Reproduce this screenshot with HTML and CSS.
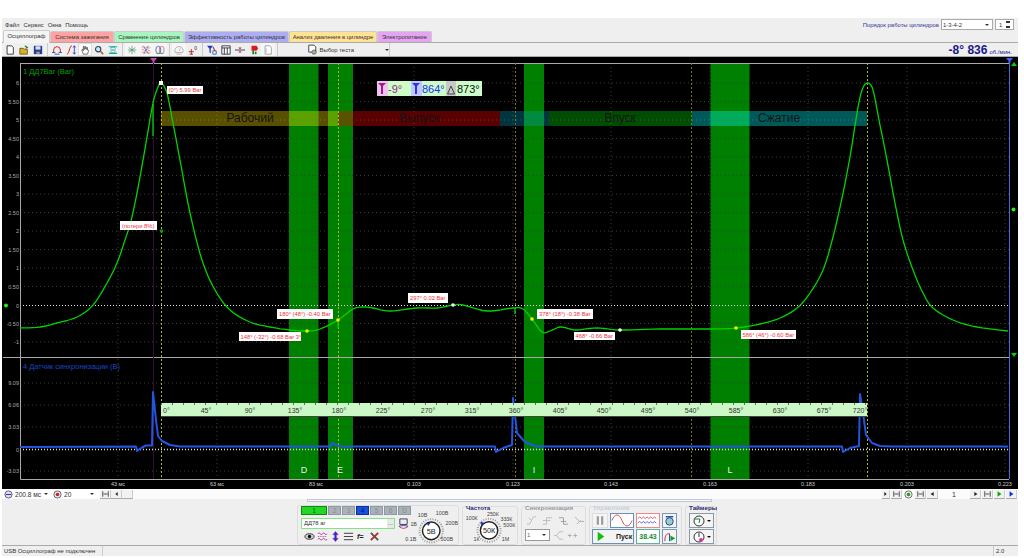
FILE: index.html
```html
<!DOCTYPE html>
<html lang="ru">
<head>
    <meta charset="UTF-8">
    <title>Осциллограф</title>
    <link rel="stylesheet" href="styles.css">
</head>
<body>
<div class="app">
    <div class="menu-row">
        <span>Файл</span><span>Сервис</span><span>Окна</span><span>Помощь</span>
        <div class="cyl-order">
            <label>Порядок работы цилиндров</label>
            <div class="combo combo-order">1-3-4-2<i class="arrow"></i></div>
            <div class="combo combo-spin">1<b class="spin"></b></div>
        </div>
    </div>

    <div class="tabs">
        <div class="tab active">Осциллограф</div>
        <div class="tab red">Система зажигания</div>
        <div class="tab green">Сравнение цилиндров</div>
        <div class="tab blue">Эффективность работы цилиндров</div>
        <div class="tab yellow">Анализ давления в цилиндре</div>
        <div class="tab purple">Электропитание</div>
    </div>

    <div class="toolbar">
        <div class="tool-group">
            <div class="tool"><svg viewBox="0 0 12 12"><path d="M2.500 1H8l2 2v8H2.500z" fill="#fff" stroke="#222"/></svg></div>
            <div class="tool"><svg viewBox="0 0 12 12"><path d="M1 4h4l1 1h4v6H1z" fill="#d8b030" stroke="#665510"/><path d="M7 1l3 2-2 1" fill="none" stroke="#2a8a2a" stroke-width="1.400"/></svg></div>
            <div class="tool"><svg viewBox="0 0 12 12"><path d="M1 1h10v10H1z" fill="#24408c"/><path d="M3 1.500h6v4H3z" fill="#dde"/><path d="M4 8h4v3H4z" fill="#99a"/></svg></div>
        </div>
        <div class="tool-group">
            <div class="tool"><svg viewBox="0 0 12 12"><path d="M2 9V6a4 4 0 0 1 8 0v3" fill="none" stroke="#e02020" stroke-width="1.200"/><path d="M0 9h4M8 9h4M3 11h6" stroke="#2040c0"/></svg></div>
            <div class="tool"><svg viewBox="0 0 12 12"><path d="M1 11c3 0 3-10 6-10" fill="none" stroke="#e02020" stroke-width="1.200"/><path d="M10 1v10M8.500 3L10 1l1.500 2M8.500 9l1.500 2 1.500-2" fill="none" stroke="#2040c0"/></svg></div>
            <div class="tool pressed"><svg viewBox="0 0 12 12"><path d="M4 11L2 6l1-1 1 2V1.500h1V5h1V2h1v3h1V3h1v3h1v2l-1 3z" fill="#fff" stroke="#333" stroke-width=".8"/></svg></div>
            <div class="tool"><svg viewBox="0 0 12 12"><circle cx="5" cy="5" r="3.200" fill="#cfe4ff" stroke="#245" stroke-width="1.300"/><path d="M7.500 7.500L11 11" stroke="#a06a20" stroke-width="2"/></svg></div>
            <div class="tool"><svg viewBox="0 0 12 12"><path d="M1 2h10M1 10h10M3 6h6" stroke="#10b0a0" stroke-width="1.300"/><path d="M3 4l3-2 3 2M3 8l3 2 3-2" fill="none" stroke="#10a090"/></svg></div>
        </div>
        <div class="tool-group">
            <div class="tool pale"><svg viewBox="0 0 12 12"><path d="M6 1v10M1 6h10" stroke="#888"/><path d="M2 3l4 3 4-3M2 9l4-3 4 3" fill="none" stroke="#40b070"/></svg></div>
            <div class="tool pale"><svg viewBox="0 0 12 12"><path d="M1 3c2-3 3 3 5 0s3 3 5 0M1 6c2-3 3 3 5 0s3 3 5 0M1 9c2-3 3 3 5 0s3 3 5 0" fill="none" stroke="#e07050"/><path d="M3 1l6 10M9 1l-6 10" stroke="#3060c0" stroke-width=".7"/></svg></div>
            <div class="tool pale"><svg viewBox="0 0 12 12"><ellipse cx="4" cy="6" rx="3" ry="4.500" fill="none" stroke="#3060c0"/><ellipse cx="8" cy="6" rx="3" ry="4.500" fill="none" stroke="#d06080"/><path d="M2 10h8" stroke="#40a060"/></svg></div>
        </div>
        <div class="tool-group">
            <div class="tool pale"><svg viewBox="0 0 12 12"><path d="M1.500 9a5 5 0 1 1 9 0z" fill="none" stroke="#aaa"/><path d="M6 7l2-3" stroke="#aaa"/><path d="M3 11h6" stroke="#aaa"/></svg></div>
            <div class="tool"><svg viewBox="0 0 12 12"><path d="M1 8h6M4 5v6M2 11h4" stroke="#b02020" stroke-width="1.100"/><text x="7.500" y="6" class="tool-zero">0</text></svg></div>
        </div>
        <div class="tool-group">
            <div class="tool"><svg viewBox="0 0 12 12"><path d="M0 1h7L4.500 4.500V10L3 9V4.500z" fill="#1838c0"/><path d="M7 2l4 8" stroke="#d02020" stroke-width="1.300"/><path d="M7 7h4v4H7z" fill="#fff" stroke="#2050a0"/></svg></div>
            <div class="tool"><svg viewBox="0 0 12 12"><path d="M1 1h10v10H1zM1 3.500h10M4 3.500V11M7.500 3.500V11" fill="#fff" stroke="#223"/></svg></div>
            <div class="tool"><svg viewBox="0 0 12 12"><path d="M0 6h12" stroke="#222"/><path d="M4 3h4L6 5zM4 9h4L6 7z" fill="#b02070"/></svg></div>
            <div class="tool"><svg viewBox="0 0 12 12"><path d="M3 1h6l2 3-2 3H3z" fill="#e01818"/><path d="M4 7h2v4H4z" fill="#108030"/><path d="M7 8h2v3H7z" fill="#108030"/></svg></div>
            <div class="tool pale"><svg viewBox="0 0 12 12"><path d="M2.500 1H8l2 2v8H2.500z" fill="#fff" stroke="#999"/><path d="M4 4v5" stroke="#bbb"/></svg></div>
        </div>
        <div class="test-select">
            <svg viewBox="0 0 12 12"><path d="M2 1h6l2 2v6H2z" fill="#fff" stroke="#333"/><circle cx="8" cy="9" r="2.500" fill="#aaa" stroke="#333" stroke-width=".6"/></svg>
            <span>Выбор теста</span>
            <i class="arrow test-arrow"></i>
        </div>
        <div class="rpm"><b>-8° 836</b><span>об./мин.</span></div>
    </div>

    <svg class="scope" viewBox="2 57 1016 432" xmlns="http://www.w3.org/2000/svg">
        <rect x="2" y="57" width="1016" height="432" fill="#000"/>
        <!-- зелёные зоны -->
        <path d="M289 63h29.500v416H289zM328 63h25v416h-25zM524 63h20v416h-20zM710.500 63h39v416h-39z" fill="#008000"/>
        <!-- сетка -->
        <path class="grid" d="M118 63V479M217 63V479M316 63V479M414 63V479M513 63V479M611 63V479M710 63V479M808 63V479M907 63V479M1005 63V479"/>
        <path class="grid" d="M20 83H1009M20 101.500H1009M20 120H1009M20 138.500H1009M20 157H1009M20 175.500H1009M20 194H1009M20 212.500H1009M20 231H1009M20 249.500H1009M20 268H1009M20 286.500H1009M20 323.500H1009M20 342H1009M20 383H1009M20 405H1009M20 427H1009M20 471H1009"/>
        <path class="zero-line" d="M20 305.500H1009"/>
        <path class="zero-line thick" d="M20 449.500H1009"/>
        <!-- такты -->
        <rect class="work" x="161" y="111" width="177" height="15"/>
        <rect class="exhaust" x="338" y="111" width="162" height="15"/>
        <rect class="overlap" x="500" y="111" width="49" height="15"/>
        <rect class="intake" x="549" y="111" width="143" height="15"/>
        <rect class="compress" x="692" y="111" width="175" height="15"/>
        <text class="phase-name" x="250" y="122">Рабочий</text>
        <text class="phase-name" x="419" y="122">Выпуск</text>
        <text class="phase-name" x="620" y="122">Впуск</text>
        <text class="phase-name" x="779" y="122">Сжатие</text>
        <!-- рамка и маркеры -->
        <path class="frame" d="M20.500 63V479.500H1009M20 63.500H1009M3 357.500H1009"/>
        <path class="marker-purple" d="M153.500 63V479"/>
        <path class="marker-blue" d="M1009.500 63V479"/>
        <path class="tdc bright" d="M161.500 63V479M338.500 63V479M867.500 63V479"/>
        <path class="tdc" d="M515.500 63V479M691.500 63V479"/>
        <path d="M150 58h7l-2.500 3v2h-2v-2z" fill="#c040c0"/>
        <path d="M1006 58h7l-2.500 3v2h-2v-2z" fill="#4060ff"/>
        <path d="M1011 66l3-4 3 4z" fill="#00d000"/>
        <path d="M1011 353l3 4 3-4z" fill="#00d000"/>
        <circle cx="6" cy="305.500" r="2" fill="#20f020"/>
        <circle cx="1013.500" cy="209.500" r="2" fill="#20f020"/>
        <!-- датчик синхронизации -->
        <polyline class="trace-blue" points="20,447 136,446.500 137,451 142,447.500 146,445.500 152,445.500 153,392 156,420 158,436 162,441 170,445 180,446.500 330,446.500 332,443 336,445 342,446.500 495,446.500 496,452 503,448 512,445 513,398 517,433 525,442 535,446 545,446.500 842,446.500 843,452 850,448 859,446 860,394 864,420 866,435 872,443 880,446 892,446.500 1008,446.500"/>
        <!-- давление -->
        <polyline class="trace-green smooth" points="20,328 40,327 57,323 77,317 93,305 107,283 117,263 125,240 132,217 140,177 147,137 153,103 158,87 161,83 165,88 168,97 173,123 180,160 190,213 202,260 215,290 230,310 250,322 270,327 290,330 307,331 320,329 338,320 353,309 362,307 373,308 390,311 417,308 437,308 453,305 463,305 487,311 513,308 523,309 532,319 542,332 550,331 560,327 570,329 577,330 597,328 620,330 660,329 710,329 736,328 760,324 780,318 797,308 810,293 823,270 833,237 842,198 850,157 857,113 862,90 867.500,83 873,90 879,120 887,160 895,203 903,240 913,270 923,293 933,308 953,320 977,327 1008,331"/>
        <path class="trace-green" d="M153 104V136M338 320V328M515 308V314"/>
        <!-- шкала углов -->
        <rect x="161" y="403" width="706" height="13" fill="#ccf7c6"/>
        <path d="M161 416.500H867" stroke="#444"/>
        <path class="scale-ticks" d="M161 404H867"/>
        <g class="scale-text">
            <text x="163" y="413" class="start">0°</text><text x="206" y="413">45°</text><text x="250" y="413">90°</text><text x="295" y="413">135°</text><text x="339" y="413">180°</text><text x="383" y="413">225°</text><text x="428" y="413">270°</text><text x="472" y="413">315°</text><text x="516" y="413">360°</text><text x="560" y="413">405°</text><text x="604" y="413">450°</text><text x="648" y="413">495°</text><text x="692" y="413">540°</text><text x="736" y="413">585°</text><text x="780" y="413">630°</text><text x="824" y="413">675°</text><text x="860" y="413">720°</text>
        </g>
        <!-- буквы клапанов -->
        <g class="band-letter"><text x="304" y="473">D</text><text x="340" y="473">E</text><text x="534" y="473">I</text><text x="730" y="473">L</text></g>
        <!-- подписи осей -->
        <text class="ch-green" x="23" y="74">1 ДД7Bar (Bar)</text>
        <text class="ch-blue" x="23" y="369">4 Датчик синхронизации (В)</text>
        <g class="axis">
            <text x="19" y="85">6</text><text x="19" y="103.500">5.50</text><text x="19" y="122">5</text><text x="19" y="140.500">4.50</text><text x="19" y="159">4</text><text x="19" y="177.500">3.50</text><text x="19" y="196">3</text><text x="19" y="214.500">2.50</text><text x="19" y="233">2</text><text x="19" y="251.500">1.50</text><text x="19" y="270">1</text><text x="19" y="288.500">0.50</text><text x="19" y="307.500">0</text><text x="19" y="325.500">-0.50</text><text x="19" y="344">-1</text>
            <text x="19" y="385">9.09</text><text x="19" y="407">6.06</text><text x="19" y="429">3.03</text><text x="19" y="451.500">0</text><text x="19" y="473">-3.03</text>
        </g>
        <g class="time">
            <text x="118" y="486">43 мс</text><text x="217" y="486">63 мс</text><text x="316" y="486">83 мс</text><text x="414" y="486">0.103</text><text x="513" y="486">0.123</text><text x="611" y="486">0.143</text><text x="710" y="486">0.163</text><text x="808" y="486">0.183</text><text x="907" y="486">0.203</text><text x="1005" y="486">0.223</text>
        </g>
        <!-- точки -->
        <rect x="159" y="81" width="4" height="4" fill="#fff"/>
        <circle cx="161.500" cy="231" r="1.800" fill="#0a9a0a"/>
        <circle cx="307" cy="331" r="1.800" fill="#ffee00"/><circle cx="338" cy="320" r="1.800" fill="#ffee00"/><circle cx="532" cy="319" r="1.800" fill="#ffee00"/><circle cx="736" cy="328" r="1.800" fill="#ffee00"/>
        <circle cx="453" cy="305" r="1.800" fill="#fff"/><circle cx="620" cy="330" r="1.800" fill="#fff"/>
        <!-- выноски -->
        <g class="tag">
            <rect x="167" y="86" width="36" height="8"/><text x="168.500" y="92.200">(0°) 5.99 Bar</text>
            <rect x="120" y="221" width="37" height="9"/><text x="122" y="227.800">(потери 8%)</text>
            <rect x="408" y="293" width="40" height="10"/><text x="410" y="300.300">297° 0.02 Bar</text>
            <rect x="277" y="309" width="56" height="10"/><text x="279" y="316.300">180° (48°) -0.40 Bar</text>
            <rect x="239" y="332" width="62" height="9"/><text x="240.500" y="339">148° (-32°) -0.68 Bar 3°</text>
            <rect x="537" y="309" width="56" height="10"/><text x="539" y="316.300">378° (18°) -0.38 Bar</text>
            <rect x="574" y="332" width="41" height="8"/><text x="575.500" y="338.200">468° -0.66 Bar</text>
            <rect x="741" y="330" width="55" height="9"/><text x="742.500" y="337">586° (46°) -0.60 Bar</text>
        </g>
        <!-- окно курсоров -->
        <rect x="377" y="81" width="105" height="15" fill="#ccfcc8"/>
        <rect x="377" y="81" width="11" height="15" fill="#eec4ee"/>
        <rect x="411" y="81" width="11" height="15" fill="#c0c6ff"/>
        <rect x="446" y="81" width="10" height="15" fill="#c8c8c8"/>
        <path d="M378 83h8l-3 3v8h-2v-8z" fill="#a01a90"/>
        <path d="M412 83h8l-3 3v8h-2v-8z" fill="#2a34e0"/>
        <path d="M451 86l-3.500 8h7z" fill="none" stroke="#444"/>
        <text class="cursor" x="388" y="93" fill="#a01a90">-9°</text>
        <text class="cursor" x="422" y="93" fill="#2030f0">864°</text>
        <text class="cursor" x="457" y="93" fill="#111">873°</text>
    </svg>

    <div class="strip">
        <div class="strip-left">
            <svg class="mini" viewBox="0 0 10 10"><circle cx="5" cy="5" r="4" fill="#dde" stroke="#557"/><path d="M2 5h6" stroke="#228"/></svg>
            <span class="strip-value wide">200.8 мс</span><i class="arrow"></i>
            <svg class="mini mini-rec" viewBox="0 0 10 10"><circle cx="5" cy="5" r="4" fill="#eee" stroke="#557"/><circle cx="5" cy="5" r="2" fill="#d02020"/></svg>
            <span class="strip-value num">20</span><i class="arrow"></i>
            <div class="nav first"><svg viewBox="0 0 9 7"><path d="M1 0v7M8 0v7M2 3.500h5" stroke="#222"/></svg></div>
            <div class="nav"><svg viewBox="0 0 9 7"><path d="M6 1v5L3 3.500z" fill="#222"/></svg></div>
            <div class="nav"></div>
        </div>
        <div class="strip-right">
            <div class="nav small"><svg viewBox="0 0 9 7"><path d="M3 1v5l3-2.500z" fill="#222"/></svg></div>
            <div class="nav"><svg viewBox="0 0 9 7"><path d="M1 0v7M8 0v7M2 3.500h5" stroke="#222"/></svg></div>
            <svg class="mini" viewBox="0 0 10 10"><circle cx="5" cy="5" r="4" fill="#eee" stroke="#666"/><circle cx="5" cy="5" r="2" fill="#20a020"/></svg>
            <div class="nav"><svg viewBox="0 0 9 7"><path d="M1 0v7M8 0v7M2 3.500h5" stroke="#222"/></svg></div>
            <div class="nav"><svg viewBox="0 0 9 7"><path d="M6 1v5L2 3.500z" fill="#222"/></svg></div>
            <span class="page-num">1</span>
            <div class="nav"><svg viewBox="0 0 9 7"><path d="M3 1v5l4-2.500z" fill="#222"/></svg></div>
            <div class="nav"><svg viewBox="0 0 9 7"><path d="M1 0v7M8 0v7M2 3.500h5" stroke="#222"/></svg></div>
            <div class="nav"><svg viewBox="0 0 9 7"><path d="M2 0v7l5-3.500z" fill="#10a010"/></svg></div>
            <div class="nav"><svg viewBox="0 0 9 7"><path d="M2 0v7l5-3.500z" fill="#1030e0"/></svg></div>
        </div>
    </div>

    <div class="panel">
        <div class="panel-scroll"></div>
        <div class="groups">
            <div class="group group-channel">
                <div class="channel-side">
                    <div class="channels">
                        <div class="ch ch-on">1</div><div class="ch">2</div><div class="ch">3</div><div class="ch ch-blue-on">4</div><div class="ch">5</div><div class="ch">6</div><div class="ch">D</div>
                    </div>
                    <div class="sensor-row">
                        <div class="sensor-input">ДД78 аг<span class="dots">...</span></div>
                        <svg class="icon-s" viewBox="0 0 12 12"><path d="M2 1h8v6H2z" fill="#eee" stroke="#335"/><path d="M1 9c3 3 7 3 10 0" fill="none" stroke="#d03030"/><path d="M1 9c3-1 7-1 10 0" fill="none" stroke="#2040c0"/></svg>
                    </div>
                    <div class="channel-tools">
                        <svg class="icon-s" viewBox="0 0 12 12"><ellipse cx="6" cy="6" rx="5" ry="3" fill="#ccc" stroke="#333"/><circle cx="6" cy="6" r="1.800" fill="#111"/></svg>
                        <svg class="icon-s" viewBox="0 0 12 12"><path d="M1 3c2-3 3 3 5 0s3 3 5 0M1 9c2-3 3 3 5 0s3 3 5 0" fill="none" stroke="#a020a0"/><path d="M1 6h10" stroke="#c03060" stroke-dasharray="1 1"/></svg>
                        <svg class="icon-s" viewBox="0 0 12 12"><path d="M3 4l3-3.500L9 4H7v4h2l-3 3.500L3 8h2V4z" fill="#2030d0" stroke="#a020a0" stroke-width=".5"/></svg>
                        <svg class="icon-s" viewBox="0 0 12 12"><path d="M1 2.500h10M1 6h10M1 9.500h10" stroke="#333"/></svg>
                        <svg class="icon-s" viewBox="0 0 12 12"><text x="1" y="9" class="fx">f=</text></svg>
                        <svg class="icon-s" viewBox="0 0 12 12"><path d="M2 2l8 8" stroke="#555" stroke-width="2"/><path d="M10 2l-8 8" stroke="#b03020" stroke-width="2"/></svg>
                    </div>
                </div>
                <svg class="knob-volt" viewBox="0 0 60 38">
                    <circle class="knob-ticks" cx="33" cy="25" r="12"/>
                    <circle class="knob-ring" cx="33" cy="25" r="9"/>
                    <path d="M28 17l4 0-2 3z" fill="#2030d0"/>
                    <text class="knob-value" x="33" y="28">5В</text>
                    <g class="knob-label"><text x="24" y="11">10В</text><text x="44" y="9">100В</text><text x="15" y="20">1В</text><text x="54" y="19">200В</text><text x="12" y="35">0.1В</text><text x="49" y="35">500В</text></g>
                </svg>
            </div>
            <div class="group group-freq">
                <div class="group-title navy">Частота</div>
                <svg class="knob-freq" viewBox="0 0 56 32">
                    <circle class="knob-ticks" cx="26" cy="19" r="12"/>
                    <circle class="knob-ring" cx="26" cy="19" r="9"/>
                    <path d="M17 10l4 1-3 3z" fill="#2030d0"/>
                    <text class="knob-value" x="26" y="22">50К</text>
                    <g class="knob-label"><text x="8" y="8">100К</text><text x="30" y="4">250К</text><text x="44" y="9">333К</text><text x="47" y="15">500К</text><text x="13" y="30">1К</text><text x="43" y="30">1М</text></g>
                </svg>
            </div>
            <div class="group group-sync">
                <div class="group-title grey">Синхронизация</div>
                <div class="sync-grid">
                    <svg class="icon-s" viewBox="0 0 12 12"><path d="M1 10h3l4-8h3M3 3l3 3" fill="none" stroke="#bbb"/></svg>
                    <svg class="icon-s" viewBox="0 0 12 12"><path d="M1 10h4V3h6M1 6h8" fill="none" stroke="#bbb"/></svg>
                    <svg class="icon-s" viewBox="0 0 12 12"><path d="M1 3h5v7h5M3 7h6" fill="none" stroke="#999"/></svg>
                    <svg class="icon-s" viewBox="0 0 12 12"><path d="M1 2l5 5h5M3 10l4-4" fill="none" stroke="#aab"/></svg>
                </div>
                <div class="sync-row">
                    <div class="combo combo-sync">1<i class="arrow"></i></div>
                    <svg class="icon-s" viewBox="0 0 12 12"><path d="M1 6h3l3-4h4M4 6l3 4h4" fill="none" stroke="#bbb"/></svg>
                    <svg class="icon-s" viewBox="0 0 12 12"><path d="M1 6h4M7 6h4M3 4v4M9 4v4" stroke="#aaa"/></svg>
                </div>
            </div>
            <div class="group group-ctrl">
                <div class="group-title pale-title">Управление</div>
                <div class="ctrl-grid">
                    <div class="ctrl ctrl-pause"><svg viewBox="0 0 12 12"><path d="M3 2h2v8H3zM7 2h2v8H7z" fill="#999"/></svg></div>
                    <div class="ctrl ctrl-sine"><svg viewBox="0 0 24 12"><path d="M1 6c3-8 8-8 11 0s8 8 11 0" fill="none" stroke="#e04040"/></svg></div>
                    <div class="ctrl ctrl-wave"><svg viewBox="0 0 24 12"><path d="M1 4l2-2 2 2 2-2 2 2 2-2 2 2 2-2 2 2 2-2 2 2" fill="none" stroke="#d02030" stroke-width=".8"/><path d="M1 9l2-2 2 2 2-2 2 2 2-2 2 2 2-2 2 2 2-2 2 2" fill="none" stroke="#2030d0" stroke-width=".8"/></svg></div>
                    <div class="ctrl ctrl-small"><svg viewBox="0 0 14 12"><circle cx="7" cy="7" r="4" fill="#9cc" stroke="#2040a0"/><path d="M3 2h8" stroke="#2040a0" stroke-width="1.500"/></svg></div>
                    <div class="ctrl ctrl-start"><svg viewBox="0 0 12 14"><path d="M1 0v14l10-7z" fill="#10c010"/></svg><b>Пуск</b></div>
                    <div class="ctrl ctrl-time">38.43</div>
                    <div class="ctrl ctrl-small"><svg viewBox="0 0 14 12"><path d="M2 11c0-8 3-8 5-8" fill="none" stroke="#d02030"/><path d="M7 3v8" stroke="#2040c0"/><path d="M8 5v6l5-3z" fill="#10a010"/></svg></div>
                </div>
            </div>
            <div class="group group-timer">
                <div class="group-title navy">Таймеры</div>
                <div class="timer-btn"><svg viewBox="0 0 12 12"><circle cx="6" cy="6" r="5" fill="#fff" stroke="#333"/><path d="M2 4h5L6 8" fill="none" stroke="#108040"/></svg><i class="arrow dark"></i></div>
                <div class="timer-btn"><svg viewBox="0 0 12 12"><circle cx="6" cy="6" r="5" fill="#fff" stroke="#333"/><path d="M6 2v4" stroke="#333"/><circle cx="8" cy="9" r="2" fill="#e030a0"/></svg><i class="arrow dark"></i></div>
            </div>
        </div>
    </div>

    <div class="status">
        <div class="status-msg">USB Осциллограф не подключен</div>
        <div class="status-fill"></div>
        <div class="status-ver">2.0</div>
    </div>
</div>
<script src="chart.js"></script>
</body>
</html>
```

FILE: styles.css
```css
* {
    box-sizing: border-box;
}

html, body {
    margin: 0;
    height: 558px;
    overflow: hidden;
    background: #fff;
}

body {
    font-family: "Liberation Sans", Arial, sans-serif;
    font-size: 5.9px;
    color: #333;
    white-space: nowrap;
}

.app {
    width: 1016px;
    height: 538px;
    margin: 18px 0 0 2px;
    background: #efefef;
    display: flex;
    flex-direction: column;
}

.arrow {
    width: 0;
    height: 0;
    border-left: 2px solid transparent;
    border-right: 2px solid transparent;
    border-top: 2px solid #333;
}

/* menu */
.menu-row {
    height: 13px;
    display: flex;
    align-items: center;
    padding-left: 3px;
    gap: 4px;
}

.cyl-order {
    margin-left: auto;
    margin-right: 4px;
    display: flex;
    align-items: center;
    gap: 2px;
}

.cyl-order label {
    color: #34349a;
}

.combo {
    height: 11px;
    background: #fff;
    border: 1px solid #aaa;
    display: flex;
    align-items: center;
    justify-content: space-between;
    padding: 0 3px 0 1px;
}

.combo-order {
    width: 52px;
}

.combo-spin {
    width: 19px;
    padding-left: 3px;
}

.spin {
    width: 4px;
    height: 7px;
    border-top: 2px solid #333;
    border-bottom: 2px solid #333;
}

/* tabs */
.tabs {
    height: 12px;
    display: flex;
    align-items: flex-end;
    padding-left: 1px;
    border-bottom: 1px solid #aaa;
}

.tab {
    height: 11px;
    line-height: 10px;
    padding: 0 2px;
    text-align: center;
    border: 1px solid #ccc;
    border-bottom: none;
    border-radius: 2px 2px 0 0;
    flex: none;
}

.tab.active {
    width: 47px;
    height: 13px;
    line-height: 11px;
    background: #f4f4f4;
    margin-bottom: -1px;
}

.tab.red { width: 64px; background: #ffa2a2; }
.tab.green { width: 70px; background: #a8f5c0; }
.tab.blue { width: 105px; background: #adadf2; }
.tab.yellow { width: 88px; background: #ffe294; }
.tab.purple { width: 55px; background: #e4a4f2; }

/* toolbar */
.toolbar {
    height: 14px;
    display: flex;
    align-items: center;
    padding-left: 1px;
    border-bottom: 1px solid #aaa;
}

.tool-group {
    height: 13px;
    display: flex;
    padding-right: 2px;
    margin-right: 2px;
    border-right: 1px solid #ccc;
}

.tool {
    width: 14px;
    height: 13px;
    display: flex;
    align-items: center;
    justify-content: center;
}

.tool svg {
    width: 10px;
    height: 10px;
}

.tool.pressed {
    background: #fff;
    border: 1px solid #ddd;
}

.tool.pale {
    background: #f6f6f6;
}

.tool-zero {
    font-size: 6px;
    fill: #223;
}

.test-select {
    width: 110px;
    height: 13px;
    display: flex;
    align-items: center;
    padding-left: 27px;
    gap: 2px;
    border-right: 1px solid #ccc;
}

.test-select svg {
    width: 11px;
    height: 11px;
}

.test-arrow {
    margin-left: 29px;
}

.rpm {
    margin-left: auto;
    margin-right: 6px;
    display: flex;
    align-items: baseline;
    gap: 2px;
    color: #1a1a8c;
}

.rpm b {
    font-size: 12px;
}

.rpm span {
    font-size: 6px;
}

/* scope */
.scope {
    display: block;
    flex: none;
    width: 1016px;
    height: 432px;
    font-family: "Liberation Sans", Arial, sans-serif;
}

.grid {
    stroke: #3c3c3c;
    stroke-dasharray: 1 3;
    fill: none;
}

.zero-line {
    stroke: #ddd;
    stroke-dasharray: 1 2;
    fill: none;
}

.zero-line.thick {
    stroke-width: 1.5;
}

.frame {
    stroke: #aaa;
    fill: none;
}

.marker-purple {
    stroke: #3a0a3a;
    fill: none;
}

.marker-blue {
    stroke: #4a66d8;
    fill: none;
}

.tdc {
    stroke: #77771a;
    stroke-dasharray: 2 2;
    fill: none;
}

.tdc.bright {
    stroke: #b8b820;
}

.work { fill: rgba(255, 225, 0, 0.35); }
.exhaust { fill: rgba(255, 0, 0, 0.35); }
.overlap { fill: rgba(0, 160, 190, 0.33); }
.intake { fill: rgba(0, 230, 0, 0.33); }
.compress { fill: rgba(0, 255, 255, 0.35); }

.phase-name {
    font-size: 12px;
    fill: #141414;
    text-anchor: middle;
}

.trace-green {
    fill: none;
    stroke: #00d400;
    stroke-width: 1.3;
    stroke-linejoin: round;
}

.trace-blue {
    fill: none;
    stroke: #2255e0;
    stroke-width: 2;
    stroke-linejoin: round;
}

.scale-ticks {
    stroke: #666;
    stroke-width: 2;
    stroke-dasharray: 1 10;
    fill: none;
}

.scale-text text {
    font-size: 7px;
    fill: #333;
    text-anchor: middle;
}

.scale-text .start {
    text-anchor: start;
}

.band-letter text {
    font-size: 9px;
    fill: #e8f0e8;
    text-anchor: middle;
}

.ch-green {
    font-size: 7.5px;
    fill: #00a000;
}

.ch-blue {
    font-size: 7.5px;
    fill: #1c46c8;
}

.axis text {
    font-size: 5.5px;
    fill: #aaa;
    text-anchor: end;
}

.time text {
    font-size: 5.5px;
    fill: #ccc;
    text-anchor: middle;
}

.tag rect {
    fill: #fff;
}

.tag text {
    font-size: 5.8px;
    fill: #f03040;
}

.cursor {
    font-size: 11px;
}

/* strip under scope */
.strip {
    height: 10px;
    flex: none;
    background: #fbfbfb;
    display: flex;
    justify-content: space-between;
    align-items: center;
    font-size: 6.6px;
}

.strip-left,
.strip-right {
    display: flex;
    align-items: center;
    height: 10px;
}

.strip-left {
    padding-left: 1px;
    background: #fff;
}

.strip-right {
    gap: 1px;
    padding-right: 1px;
}

.mini {
    width: 9px;
    height: 9px;
    margin: 0 1px;
}

.mini-rec {
    margin-left: 5px;
}

.strip-value {
    padding-left: 1px;
}

.strip-value.wide {
    width: 30px;
}

.strip-value.num {
    width: 27px;
}

.nav {
    width: 11px;
    height: 9px;
    background: #f2f2f2;
    border-bottom: 1px solid #aaa;
    border-right: 1px solid #ccc;
    display: flex;
    align-items: center;
    justify-content: center;
}

.nav svg {
    width: 7px;
    height: 6px;
}

.nav.first {
    margin-left: 6px;
}

.nav.small {
    width: 8px;
}

.page-num {
    width: 30px;
    text-align: center;
    font-size: 7px;
}

/* bottom panel */
.panel {
    height: 47px;
    flex: none;
    padding-left: 295px;
    border-bottom: 1px solid #aaa;
}

.panel-scroll {
    width: 405px;
    height: 3px;
    margin-left: 10px;
    background: #f6f8fc;
    border: 1px solid #c0c8d8;
}

.groups {
    display: flex;
    gap: 3px;
    margin-top: 3px;
}

.group {
    height: 39px;
    margin-top: 1px;
    border: 1px solid #ddd;
    border-radius: 3px;
}

.group-title {
    font-size: 6.2px;
    font-weight: bold;
    line-height: 8px;
    margin: -3px 0 0 3px;
}

.navy { color: #2a2a70; }
.grey { color: #999; }
.pale-title { color: #c4d0de; }

.group-channel {
    width: 162px;
    margin-top: 0;
    height: 40px;
    display: flex;
    padding: 0 0 0 3px;
}

.channel-side {
    width: 114px;
}

.channels {
    display: flex;
    gap: 1px;
}

.ch {
    width: 13px;
    height: 9px;
    background: #aab2b8;
    border: 1px solid #8a9aa8;
    color: #8a8a8a;
    font-size: 6.6px;
    line-height: 7px;
    text-align: center;
}

.ch-on {
    width: 26px;
    background: #22d822;
    border-color: #108810;
    color: #063;
}

.ch-blue-on {
    background: #1850e0;
    border-color: #103090;
    color: #001a60;
}

.sensor-row {
    display: flex;
    align-items: center;
    gap: 1px;
    margin-top: 3px;
}

.sensor-input {
    width: 94px;
    height: 11px;
    line-height: 9px;
    padding-left: 2px;
    background: #fff;
    border: 1px solid #84e484;
    display: flex;
    justify-content: space-between;
}

.dots {
    width: 7px;
    background: #e8e8e8;
    text-align: center;
}

.icon-s {
    width: 11px;
    height: 11px;
    flex: none;
}

.sensor-row .icon-s {
    margin-left: 2px;
}

.channel-tools {
    display: flex;
    gap: 2px;
    margin-top: 2px;
    padding-left: 3px;
}

.fx {
    font-size: 8px;
    font-weight: bold;
    font-style: italic;
    fill: #222;
}

.knob-volt {
    width: 60px;
    height: 38px;
    margin-left: -13px;
}

.knob-freq {
    width: 54px;
    height: 31px;
    margin-left: 1px;
}

.knob-ring {
    fill: #fff;
    stroke: #222;
    stroke-width: 1.5;
}

.knob-ticks {
    fill: none;
    stroke: #999;
    stroke-width: 2;
    stroke-dasharray: 1 1.5;
}

.knob-value {
    font-size: 7.5px;
    fill: #222;
    text-anchor: middle;
}

.knob-label text {
    font-size: 5.5px;
    fill: #444;
    text-anchor: middle;
}

.group-freq {
    width: 56px;
}

.group-sync {
    width: 65px;
}

.sync-grid {
    display: flex;
    gap: 5px;
    padding: 3px 0 0 4px;
}

.sync-row {
    display: flex;
    align-items: center;
    gap: 3px;
    padding: 3px 0 0 3px;
}

.combo-sync {
    width: 25px;
    height: 12px;
    color: #666;
    border-color: #999;
}

.group-ctrl {
    width: 93px;
}

.ctrl-grid {
    display: grid;
    grid-template-columns: 16px 24px 24px 15px;
    grid-template-rows: 15px 15px;
    gap: 1px 2px;
    padding-left: 2px;
    margin-top: 1px;
}

.ctrl {
    display: flex;
    align-items: center;
    justify-content: center;
    background: #f4f4f4;
    border: 1px solid #ddd;
}

.ctrl svg {
    width: 100%;
    height: 100%;
}

.ctrl-sine {
    background: #fff;
    border-color: #6a90b8;
}

.ctrl-wave {
    background: #fff;
    border-color: #e88;
}

.ctrl-small {
    border-color: #7898b8;
}

.ctrl-start {
    grid-column: span 2;
    justify-content: flex-start;
    padding-left: 4px;
    gap: 11px;
    border-color: #6a90b8;
    font-size: 7px;
    color: #222;
}

.ctrl-start svg {
    width: 8px;
    height: 13px;
}

.ctrl-time {
    font-size: 7px;
    font-weight: bold;
    color: #188a30;
    background: #fff;
    border-color: #60b0a0;
}

.group-timer {
    width: 32px;
}

.timer-btn {
    width: 25px;
    height: 15px;
    margin: 1px 0 0 3px;
    background: #f4f4f4;
    border: 1px solid #8a9aa8;
    display: flex;
    align-items: center;
    justify-content: center;
    gap: 2px;
}

.timer-btn svg {
    width: 12px;
    height: 12px;
}

.arrow.dark {
    border-top-color: #111;
}

/* status bar */
.status {
    height: 10px;
    flex: none;
    display: flex;
    align-items: center;
}

.status-msg {
    width: 101px;
    padding-left: 2px;
    border-right: 1px solid #ccc;
    height: 10px;
    line-height: 10px;
}

.status-fill {
    flex: 1;
}

.status-ver {
    width: 25px;
    padding-left: 2px;
    border-left: 1px solid #ccc;
    line-height: 10px;
}
```

FILE: chart.js
```js
// smooth the traced pressure curve (catmull-rom through the measured points)
document.querySelectorAll('polyline.smooth').forEach((line) => {
    const p = line.getAttribute('points').trim().split(/\s+/).map((s) => s.split(',').map(Number));
    const out = [];
    for (let i = 0; i < p.length - 1; i++) {
        const a = p[Math.max(i - 1, 0)], b = p[i], c = p[i + 1], d = p[Math.min(i + 2, p.length - 1)];
        for (let k = 0; k < 6; k++) {
            const t = k / 6;
            const at = (n) => 0.5 * (2 * b[n] + (c[n] - a[n]) * t
                + (2 * a[n] - 5 * b[n] + 4 * c[n] - d[n]) * t * t
                + (3 * b[n] - a[n] - 3 * c[n] + d[n]) * t * t * t);
            out.push(at(0).toFixed(1) + ',' + at(1).toFixed(1));
        }
    }
    out.push(p[p.length - 1].join(','));
    line.setAttribute('points', out.join(' '));
});
```
